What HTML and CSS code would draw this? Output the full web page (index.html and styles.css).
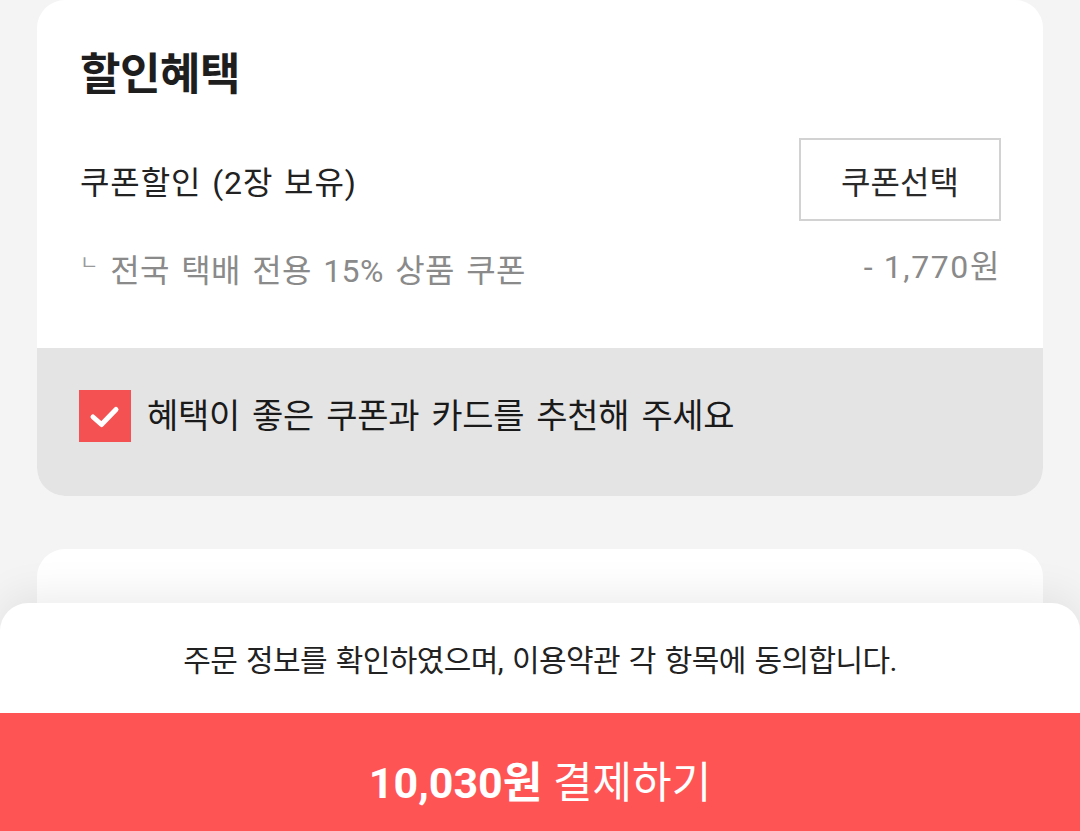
FILE: index.html
```html
<!DOCTYPE html>
<html lang="ko">
<head>
<meta charset="utf-8">
<link rel="stylesheet" href="styles.css">
</head>
<body>
<main class="page">
  <section class="card">
    <div class="card-body">
      <h2 class="title">할인혜택</h2>
      <div class="coupon-row">
        <span class="coupon-label">쿠폰할인 (2장 보유)</span>
        <button class="coupon-btn" type="button">쿠폰선택</button>
      </div>
      <div class="coupon-detail">
        <span class="detail-name"><span class="corner">ㄴ</span> 전국 택배 전용 15% 상품 쿠폰</span>
        <span class="detail-amount">- 1,770원</span>
      </div>
    </div>
    <div class="recommend">
      <span class="checkbox">
        <svg viewBox="0 0 52 52" width="52" height="52" aria-hidden="true">
          <path d="M14 27 L22.5 34.5 L37 19.5" fill="none" stroke="#fff" stroke-width="5" stroke-linecap="round" stroke-linejoin="round"/>
        </svg>
      </span>
      <span class="recommend-text">혜택이 좋은 쿠폰과 카드를 추천해 주세요</span>
    </div>
  </section>
  <section class="card card-next"></section>
</main>
<footer class="sheet">
  <p class="agree">주문 정보를 확인하였으며, 이용약관 각 항목에 동의합니다.</p>
  <button class="pay-btn" type="button"><strong>10,030원</strong> 결제하기</button>
</footer>
</body>
</html>
```
FILE: styles.css
```css
* { box-sizing: border-box; }
html, body { margin: 0; padding: 0; }
body {
  background: #f4f4f4;
  font-family: Roboto, "Noto Sans CJK KR", sans-serif;
  color: #1c1c1c;
  width: 1080px;
  height: 831px;
  overflow: hidden;
  position: relative;
}
.page {
  padding: 0 37px;
  display: flex;
  flex-direction: column;
  gap: 53px;
}
.card {
  background: #fff;
  border-radius: 28px;
  overflow: hidden;
}
.card-body {
  padding: 40px 42px 0 43px;
  height: 348px;
}
.title {
  margin: 0;
  font-size: 44px;
  font-weight: 700;
  line-height: 70px;
  color: #1e1e1e;
  letter-spacing: -0.5px;
}
.coupon-row {
  margin-top: 28px;
  display: flex;
  justify-content: space-between;
  align-items: center;
}
.coupon-label {
  font-size: 32px;
  color: #222;
  letter-spacing: 0.9px;
  word-spacing: 2px;
}
.coupon-btn {
  width: 202px;
  height: 83px;
  border: 2px solid #d2d2d2;
  background: #fff;
  font-family: inherit;
  font-size: 32px;
  color: #2a2a2a;
  padding: 0;
}
.coupon-detail {
  margin-top: 17px;
  display: flex;
  justify-content: space-between;
  align-items: center;
  font-size: 32px;
  color: #8a8a8a;
  line-height: 50px;
}
.detail-name {
  word-spacing: 3px;
  letter-spacing: 0.4px;
}
.corner {
  font-size: 20px;
  vertical-align: 12px;
  color: #9a9a9a;
}
.detail-amount {
  letter-spacing: 1.6px;
}
.recommend {
  background: #e4e4e4;
  height: 148px;
  display: flex;
  align-items: flex-start;
  gap: 16px;
  padding: 42px 42px 0;
}
.checkbox {
  width: 52px;
  height: 52px;
  background: #f45252;
  display: flex;
  flex: none;
}
.recommend-text {
  font-size: 34px;
  line-height: 52px;
  color: #1a1a1a;
  letter-spacing: -0.3px;
  word-spacing: 4px;
}
.card-next {
  height: 120px;
}
.sheet {
  position: absolute;
  left: 0;
  right: 0;
  bottom: 0;
  height: 228px;
  background: #fff;
  border-radius: 28px 28px 0 0;
  box-shadow: 0 -8px 40px rgba(0, 0, 0, 0.08);
  display: flex;
  flex-direction: column;
}
.agree {
  margin: 0;
  height: 110px;
  display: flex;
  align-items: center;
  justify-content: center;
  font-size: 30px;
  color: #222;
  letter-spacing: -0.6px;
  word-spacing: 2px;
}
.pay-btn {
  flex: 1;
  border: 0;
  background: #ff5454;
  color: #fff;
  font-family: inherit;
  font-size: 43px;
  font-weight: 400;
  padding: 14px 0 0;
}
.pay-btn strong { font-weight: 700; }
```
